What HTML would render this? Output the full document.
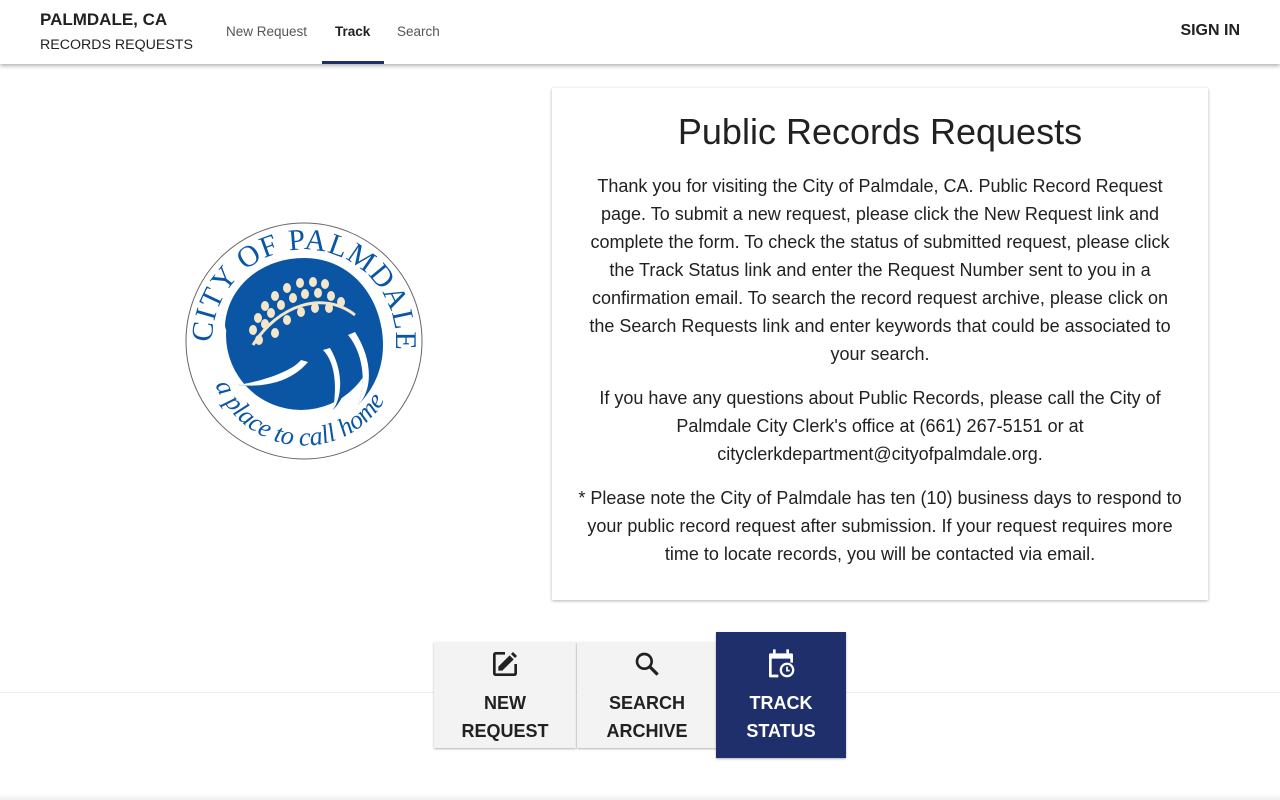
<!DOCTYPE html>
<html><head><meta charset="utf-8"><style>
*{margin:0;padding:0;box-sizing:border-box}
body{width:1280px;height:800px;overflow:hidden;background:#fff;font-family:"Liberation Sans",Roboto,sans-serif;color:#212121;position:relative}
.hdr{position:absolute;left:0;top:0;width:1280px;height:64px;background:#fff;box-shadow:0 2px 4px rgba(0,0,0,.3);z-index:2}
.t1{position:absolute;left:40px;top:10px;font-size:17px;font-weight:bold}
.t2{position:absolute;left:40px;top:37px;font-size:14.2px}
.nav{position:absolute;top:24px;font-size:13.5px;color:#555}
.sign{position:absolute;right:40px;top:22px;font-size:16px;font-weight:bold}
.card{position:absolute;left:552px;top:88px;width:656px;height:512px;background:#fff;box-shadow:0 1px 3px rgba(0,0,0,.3);text-align:center}
.card h1{font-weight:normal;font-size:36px;margin-top:22px;line-height:44px}
.card p{font-size:18px;line-height:28px;margin:18px 0 0;white-space:nowrap}
.card p+p{margin-top:16px}
.btn{position:absolute;background:#f3f3f3;box-shadow:0 1px 2px rgba(0,0,0,.3);text-align:center;font-weight:bold;font-size:18px;line-height:28px;color:#212121}
.btn svg{display:block;margin:6px auto 9px}
</style></head><body>
<div class="hdr">
<div class="t1">PALMDALE, CA</div><div class="t2">RECORDS REQUESTS</div>
<div class="nav" style="left:226px">New Request</div>
<div class="nav" style="left:335px;color:#212121;font-weight:bold">Track</div>
<div class="nav" style="left:397px">Search</div>
<div style="position:absolute;left:322px;top:61px;width:62px;height:3px;background:#1f2f6b"></div>
<div class="sign">SIGN IN</div>
</div>
<svg style="position:absolute;left:183px;top:220px" width="242" height="242" viewBox="0 0 242 242">
<circle cx="121" cy="121" r="118" fill="#fff" stroke="#666" stroke-width="1"/>
<path d="M121 38 C170 38 200 80 200 125 C200 150 190 170 175 185 C185 160 178 130 165 115 C172 145 165 175 150 190 C155 160 150 140 140 130 C130 160 95 170 55 165 C85 160 110 150 118 140 C75 140 42 120 42 105 C45 65 80 38 121 38Z" fill="#0b56a4"/>
<circle cx="118" cy="115" r="75" fill="#0b56a4"/>
<path d="M175 185 C185 160 178 130 165 115 L172 112 C190 140 190 170 175 185Z M150 190 C155 160 150 140 140 130 L147 128 C160 150 160 175 150 190Z M55 165 C85 160 110 150 118 140 L125 142 C110 160 85 168 55 165Z" fill="#fff"/>
<g fill="#f3e6c9">
<ellipse cx="70" cy="110" rx="4" ry="5"/><ellipse cx="75" cy="98" rx="4" ry="5"/><ellipse cx="82" cy="86" rx="4" ry="5"/><ellipse cx="92" cy="76" rx="4" ry="5"/><ellipse cx="104" cy="68" rx="4" ry="5"/><ellipse cx="117" cy="63" rx="4" ry="5"/><ellipse cx="130" cy="62" rx="4" ry="5"/><ellipse cx="142" cy="64" rx="4" ry="5"/>
<ellipse cx="82" cy="104" rx="4" ry="5"/><ellipse cx="88" cy="93" rx="4" ry="5"/><ellipse cx="98" cy="85" rx="4" ry="5"/><ellipse cx="110" cy="78" rx="4" ry="5"/><ellipse cx="122" cy="74" rx="4" ry="5"/><ellipse cx="135" cy="73" rx="4" ry="5"/><ellipse cx="148" cy="76" rx="4" ry="5"/><ellipse cx="158" cy="82" rx="4" ry="5"/>
<ellipse cx="76" cy="120" rx="4" ry="5"/><ellipse cx="92" cy="113" rx="4" ry="5"/><ellipse cx="104" cy="100" rx="4" ry="5"/><ellipse cx="118" cy="92" rx="4" ry="5"/><ellipse cx="132" cy="88" rx="4" ry="5"/><ellipse cx="146" cy="88" rx="4" ry="5"/>
<path d="M70 125 C95 85 140 70 172 95" stroke="#f3e6c9" stroke-width="3" fill="none"/>
</g>
<defs><path id="top" d="M30 135 A92 92 0 1 1 212 135"/><path id="bot" d="M28 150 A95 95 0 0 0 214 150"/></defs>
<text font-family="Liberation Serif,serif" font-size="30" fill="#0b56a4" letter-spacing="1"><textPath href="#top" startOffset="4%">CITY OF PALMDALE</textPath></text>
<text font-family="Liberation Serif,serif" font-style="italic" font-size="26" fill="#0b56a4"><textPath href="#bot" startOffset="6%">a place to call home</textPath></text>
</svg>
<div class="card">
<h1>Public Records Requests</h1>
<p>Thank you for visiting the City of Palmdale, CA. Public Record Request<br>page. To submit a new request, please click the New Request link and<br>complete the form. To check the status of submitted request, please click<br>the Track Status link and enter the Request Number sent to you in a<br>confirmation email. To search the record request archive, please click on<br>the Search Requests link and enter keywords that could be associated to<br>your search.</p>
<p>If you have any questions about Public Records, please call the City of<br>Palmdale City Clerk's office at (661) 267-5151 or at<br>cityclerkdepartment@cityofpalmdale.org.</p>
<p>* Please note the City of Palmdale has ten (10) business days to respond to<br>your public record request after submission. If your request requires more<br>time to locate records, you will be contacted via email.</p>
</div>
<div style="position:absolute;left:0;top:692px;width:1280px;height:1px;background:#eee"></div>
<div style="position:absolute;left:0;top:794px;width:1280px;height:6px;background:linear-gradient(#fff,#eee)"></div>
<div class="btn" style="left:434px;top:642px;width:142px;height:106px">
<svg width="32" height="32" viewBox="0 0 24 24"><path d="M19 19H5V5h7V3H5a2 2 0 0 0-2 2v14a2 2 0 0 0 2 2h14a2 2 0 0 0 2-2v-7h-2v7z" fill="#212121"/><path d="M7 17v-3l8.5-8.5 3 3L10 17H7zM16.5 4.5l1.5-1.5 3 3-1.5 1.5z" fill="#212121"/></svg>NEW<br>REQUEST</div>
<div class="btn" style="left:577px;top:642px;width:140px;height:106px">
<svg width="32" height="32" viewBox="0 0 24 24"><circle cx="10" cy="10" r="5.5" stroke="#212121" stroke-width="2" fill="none"/><path d="M14 14l6 6" stroke="#212121" stroke-width="2.4"/></svg>SEARCH<br>ARCHIVE</div>
<div class="btn" style="left:716px;top:632px;width:130px;height:126px;background:#1f2f6b;color:#fff;padding-top:10px">
<svg width="32" height="32" viewBox="0 0 24 24"><path d="M7 1v3M17 1v3" stroke="#fff" stroke-width="2"/><path d="M4 4h16a1 1 0 0 1 1 1v6h-2V8H5v12h5v2H4a1 1 0 0 1-1-1V5a1 1 0 0 1 1-1z" fill="#fff"/><circle cx="16.5" cy="16.5" r="5.5" fill="#fff"/><circle cx="16.5" cy="16.5" r="3.8" fill="#1f2f6b"/><path d="M16.5 14v3h2" stroke="#fff" stroke-width="1.3" fill="none"/></svg>TRACK<br>STATUS</div>
</body></html>
